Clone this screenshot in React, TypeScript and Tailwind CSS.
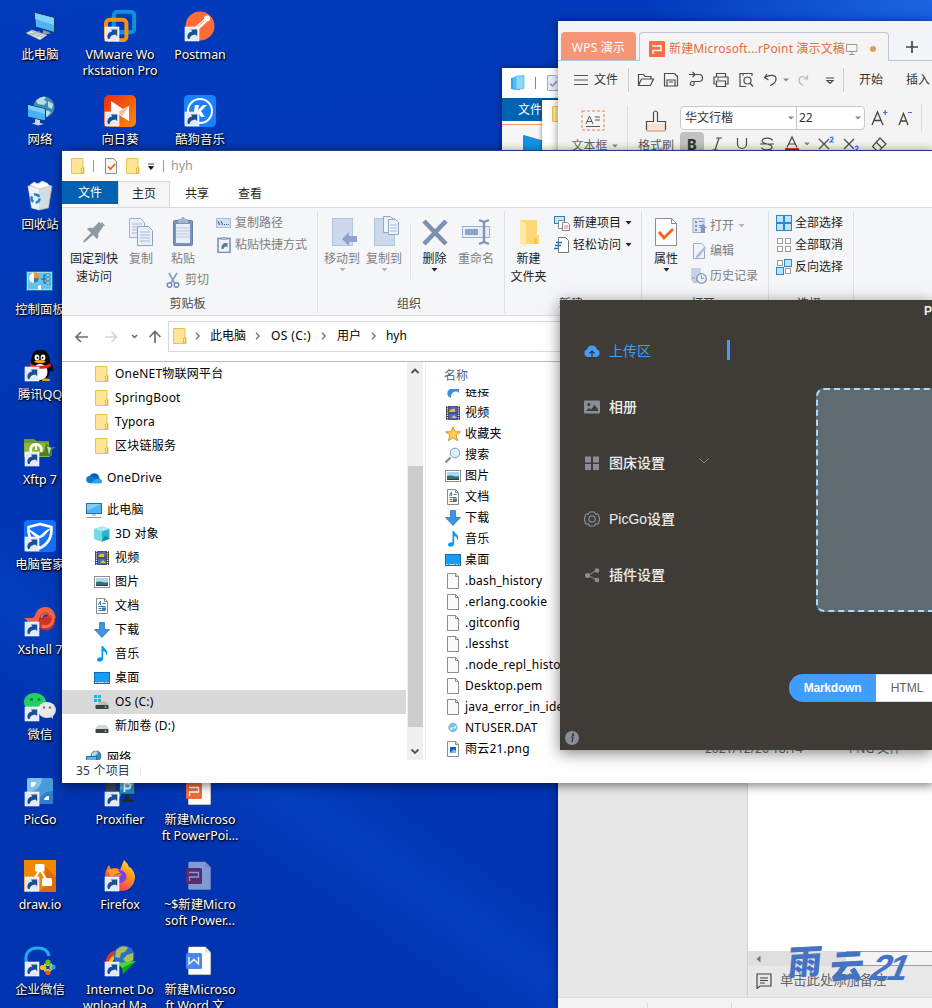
import React from 'react';

type Kids = { children?: React.ReactNode };

/* ---------- Desktop icons (32 x 32) ---------- */

const Shortcut = () => (
  <g>
    <rect x="1.2" y="17.2" width="13.6" height="13.6" fill="#e4e8fb" stroke="#fff" />
    <path d="M4 29c-1.6-4 .4-7.300 4.300-7.600l-1.300-2h6.200v6.500l-2-1.500c-3 .2-5.200 1.600-5.700 4.600z" fill="#1b4f93" />
  </g>
);

const Pic = ({ children, link = false, fade = false }: Kids & { link?: boolean; fade?: boolean }) => (
  <svg width="32" height="32" viewBox="0 0 32 32" className={fade ? 'shrink-0 opacity-50' : 'shrink-0'}>
    {children}
    {link && <Shortcut />}
  </svg>
);

const PcIcon = () => (
  <Pic>
    <path d="M10.500 2.500l20 5v15l-19-5.500z" fill="#4db4f5" stroke="#123a66" />
    <path d="M11 3l19 5v7L11 9z" fill="#7fd0fb" />
    <path d="M19 20l5 1.500 3 2-8 1z" fill="#8b99a5" />
    <path d="M2 23l6-3 15 5-7 5z" fill="#e2e6e9" stroke="#8c969d" strokeWidth=".6" />
    <path d="M5 23l14 4M8 21.500l12 4M7 25l9-4M12 27l7-4" stroke="#9ba4ab" strokeWidth=".7" />
  </Pic>
);
const NetIcon = () => (
  <Pic>
    <circle cx="20" cy="12" r="10.500" fill="#3d8fae" />
    <path d="M12 6c3-4 8-5 10-4l-2 3 3 2-3 3-6-1zM24 6l5 3-1 5-4-2zM21 15l6 2-4 5-3-2z" fill="#b8dcea" />
    <path d="M3.500 9.500l18 4.500v12l-18-4z" fill="#48b0f4" stroke="#0d3a68" />
    <path d="M4 10l17 4v5L4 14z" fill="#7cd0fb" />
    <path d="M11 24l5 1v3l4 1-6 1.500-6-2 3-1z" fill="#cdd3d7" />
  </Pic>
);
const BinIcon = () => (
  <Pic>
    <path d="M4 6l11-3 13 3-3.500 22-9 2-8-2z" fill="#d5dbe0" stroke="#9da9b3" strokeWidth=".8" />
    <path d="M4 6l11 3v21l-7-2z" fill="#eef1f3" />
    <path d="M6 5l4-3 4 2 4-3 5 2 3 3-11 3z" fill="#fafbfb" stroke="#b5bdc4" strokeWidth=".7" />
    <circle cx="11.500" cy="18.500" r="4" fill="none" stroke="#1d82d0" strokeWidth="2.600" strokeDasharray="6 2.400" />
  </Pic>
);
const PanelIcon = () => (
  <Pic>
    <rect x="2.500" y="6.500" width="26" height="19" fill="#61c3f3" stroke="#1a74b2" />
    <rect x="3.500" y="7.500" width="24" height="17" fill="none" stroke="#9be0fb" />
    <circle cx="10" cy="13" r="5" fill="#fff" />
    <path d="M10 8a5 5 0 0 1 0 10z" fill="#2b7fc0" />
    <path d="M10 7v6h5a5 5 0 0 0-5-6z" fill="#f79a25" />
    <path d="M17 14h3v-4h6M20 14h6M20 14v4h6" fill="none" stroke="#11609b" />
    <path d="M22 9h4v2h-4zM22 13h4v2h-4zM22 17h4v2h-4z" fill="#d7f1fd" stroke="#11609b" strokeWidth=".6" />
    <path d="M6 22.500h19" stroke="#f79a25" />
    <path d="M14 20.500h3v4h-3z" fill="#fff" />
  </Pic>
);
const QQIcon = () => (
  <Pic link>
    <path d="M7 12c0-17 19-17 19 0 4 5 4 8 2 10l-2-2c0 5-4 11-10 11S6 25 6 20z" fill="#0a0a0a" />
    <ellipse cx="16" cy="22" rx="7.500" ry="8" fill="#fff" />
    <ellipse cx="13" cy="7.500" rx="2.400" ry="3" fill="#fff" />
    <ellipse cx="19" cy="7.500" rx="2.400" ry="3" fill="#fff" />
    <circle cx="13.500" cy="7.800" r="1" />
    <circle cx="18.500" cy="7.800" r="1" />
    <ellipse cx="16" cy="11.600" rx="5.500" ry="1.700" fill="#f5a411" />
    <path d="M6 13c6 4 14 4 20.500 0l.5 3.500c-6 3-14 3-21.500.500z" fill="#e3211c" />
    <path d="M19 29c5-1 8 0 7 2h-8z" fill="#f5a411" />
  </Pic>
);
const XftpIcon = () => (
  <Pic link>
    <path d="M0 4h10l3 2h12v16H0z" fill="#6d9a2b" />
    <path d="M0 8h25l1 14H1z" fill="#8bb83e" />
    <path d="M22 8l4 4h6l-4 3v6H14l3-4h3z" fill="#4d7d20" />
    <path d="M23 11l4 2-2 7z" fill="#b9dcc3" />
    <path d="M7 17a5.500 5.500 0 1 1 10 0" fill="none" stroke="#fff" strokeWidth="2.600" />
    <path d="M12 8v7" stroke="#fff" strokeWidth="2" />
  </Pic>
);
const GuardIcon = () => (
  <Pic link>
    <rect width="32" height="32" rx="4" fill="#1671fb" />
    <path d="M16 4l11.500 3c.500 10-3 17-11.500 21C8 24 4 17 4.500 7z" fill="none" stroke="#fff" strokeWidth="2.600" />
    <path d="M5 9l9 6c1 1 2 1 3 0 3-3 6-6 11-7-6 4-8 11-13 10-4-1-8-4-10-9z" fill="#fff" />
  </Pic>
);
const XshellIcon = () => (
  <Pic link>
    <path d="M12 16c1 6 6 10 12 9 5-1 8-6 7-12l-5-3z" fill="#d3312b" />
    <path d="M0 13h8c3 0 3-4 5-7 4-6 16-6 18 4l1 3h-6c-1-5-9-6-10-1-1 3-2 6-5 6H6z" fill="#ee6346" />
    <path d="M17 13c0-7 12-7 12 1 0 6-6 9-11 7" fill="none" stroke="#ef6d50" strokeWidth="3" />
    <path d="M25 13c-2-4-7-1-5 2 2 4 8 2 7-3-1-6-11-6-11 2" fill="none" stroke="#c3322c" strokeWidth="1" />
  </Pic>
);
const WechatIcon = () => (
  <Pic link>
    <path d="M11 3C4 3 0 7 0 12c0 3 1 5 4 7l-1 4 5-2c10 2 15-4 14-10-1-5-6-8-11-8z" fill="#24cf68" />
    <circle cx="7.500" cy="9.500" r="1.500" fill="#0c7c3a" />
    <circle cx="15" cy="9.500" r="1.500" fill="#0c7c3a" />
    <ellipse cx="23" cy="20" rx="9" ry="8" fill="#e9e9e9" />
    <path d="M26 26l3 3v-5z" fill="#dedede" />
    <circle cx="20" cy="17.500" r="1.200" fill="#777" />
    <circle cx="26" cy="17.500" r="1.200" fill="#777" />
  </Pic>
);
const PicGoIcon = () => (
  <Pic link>
    <rect x="3" y="3" width="26" height="26" rx="2" fill="#4a9bdc" />
    <path d="M3 5a2 2 0 0 1 2-2h13c0 8-6 14-15 14z" fill="#7cc1f0" />
    <path d="M29 16v11a2 2 0 0 1-2 2H15c0-8 6-13 14-13z" fill="#2f80cc" />
    <path d="M7 7h5c0 3-2 5-5 5zM25 21v4h-5c0-2 2-4 5-4z" fill="#fff" />
  </Pic>
);
const DrawIcon = () => (
  <Pic link>
    <rect width="32" height="32" fill="#f08705" />
    <path d="M21 6l11 11v15H14l8-6z" fill="#dd6b0a" />
    <path d="M16 9L9 22M16 9l7 12" stroke="#fff" strokeWidth="2.200" />
    <rect x="11" y="4" width="9.500" height="7.500" rx="1.500" fill="#fff" />
    <rect x="18" y="18" width="10" height="8" rx="1.500" fill="#fff" />
  </Pic>
);
const WorkIcon = () => (
  <Pic link>
    <path d="M3 19C-1 8 6 3 14 3c6 0 10 3 11 8" fill="none" stroke="#1eabf2" strokeWidth="3" />
    <circle cx="24" cy="17" r="2.600" fill="#63c31a" />
    <circle cx="29" cy="22" r="2.600" fill="#20a3ef" />
    <circle cx="24" cy="27.500" r="2.600" fill="#f9502a" />
    <circle cx="18.500" cy="22.500" r="2.600" fill="#fdbc1a" />
    <path d="M20 19l4 1.500L28 19M28 20l-2 3 2 2M27 26l-3-1.500-4 1.500M20 25l2-2-2-3" fill="none" stroke="#c6d44a" strokeWidth="1.400" />
  </Pic>
);
const VmIcon = () => (
  <Pic link>
    <rect x="9.800" y="1.800" width="20.400" height="20.400" rx="3.500" fill="none" stroke="#0a95d9" strokeWidth="4" />
    <rect x="2" y="9.800" width="20.400" height="20.400" rx="3.500" fill="none" stroke="#f79209" strokeWidth="4" />
    <path d="M9.800 12.500v9.700h10" stroke="#0a95d9" strokeWidth="4" fill="none" />
  </Pic>
);
const SunIcon = () => (
  <Pic link>
    <defs>
      <linearGradient id="sun" x1="0" y1="0" x2="1" y2="1">
        <stop stopColor="#e82c12" />
        <stop offset="1" stopColor="#ff8b0b" />
      </linearGradient>
    </defs>
    <rect width="32" height="32" rx="5" fill="url(#sun)" />
    <path d="M7 6l12 8 6-3v15l-7-4-4-4-7 5z" fill="#fff" />
    <path d="M14 17l11-6-7 10z" fill="#ffb795" />
  </Pic>
);
const ProxIcon = () => (
  <Pic link>
    <path d="M2 4h10v12H2z" fill="#3b465a" />
    <rect x="15" y="4.500" width="16" height="15" rx="1" fill="#158fd9" stroke="#29323f" strokeWidth="1.500" />
    <path d="M16 5h14v5L16 15z" fill="#4bb8f3" />
    <path d="M20.500 17V8.500h3.500a2.500 2.500 0 0 1 0 5h-3" fill="none" stroke="#fff" strokeWidth="1.800" />
    <path d="M21 20h4v4l5 1-1 2H19l-2-2 4-1z" fill="#202833" />
    <path d="M14 23l2-4" stroke="#2ee85a" strokeWidth="2" />
  </Pic>
);
const FoxIcon = () => (
  <Pic link>
    <defs>
      <linearGradient id="fox" x1="1" y1="0" x2=".3" y2="1">
        <stop stopColor="#fff044" />
        <stop offset=".5" stopColor="#ff8a16" />
        <stop offset="1" stopColor="#f0286d" />
      </linearGradient>
    </defs>
    <path d="M20 0c3 3 4 4 5 7 2 0 5 4 6 9 0 9-6 15-14 15S2 26 1 17C1 11 3 8 5 5l2 4c3-2 7-1 9 1z" fill="url(#fox)" />
    <circle cx="16" cy="16.500" r="6.500" fill="#7b42e8" />
    <path d="M3 10c6-2 12 0 13 3-5 0-5 3-9 3z" fill="#ff9d14" />
    <path d="M10 15c4 0 5-2 8-1-2 3-5 4-8 1z" fill="#ff8219" />
  </Pic>
);
const IdmIcon = () => (
  <Pic link>
    <path d="M2 24C0 12 5 6 14 5l-2 4C7 11 6 15 6 24z" fill="#e2362c" />
    <path d="M4 24c0-9 3-13 8-15l-1 4c-3 3-3 6-3 11z" fill="#f4cc22" />
    <circle cx="20" cy="11" r="10.500" fill="#2f6cc4" />
    <path d="M12 6c4-6 10-5 12-3l-3 4-4 1-1 5-5-1zM23 10l6-2v7l-6 4-4-5z" fill="#a9bf57" />
    <path d="M14 18l18-2-13 13-1-6z" fill="#12a717" />
    <path d="M14 18l18-2-14 7z" fill="#35dd35" />
  </Pic>
);
const PostmanIcon = () => (
  <Pic link>
    <circle cx="16" cy="16" r="14.500" fill="#ff6c37" />
    <path d="M7 24l3-6 10-9 3 3-9 8z" fill="#fff" />
    <circle cx="23" cy="8.500" r="3" fill="#fff" />
    <path d="M11 19l9-8" stroke="#ff6c37" strokeWidth=".8" />
  </Pic>
);
const KugouIcon = () => (
  <Pic link>
    <rect width="32" height="32" rx="4.500" fill="#1b80fb" />
    <circle cx="16" cy="16" r="12" fill="none" stroke="#fff" strokeWidth="2" />
    <path d="M11 10h4l-1 5 5-5h4l-6 6 4 6h-4l-3-5-1 5H9z" fill="#fff" />
  </Pic>
);
const PptFile = ({ fade = false }: { fade?: boolean }) => (
  <Pic fade={fade}>
    <path d="M5 1.500h16l6 6V29a1 1 0 0 1-1 1H5a1 1 0 0 1-1-1V3z" fill="#fff" stroke="#3b4659" strokeWidth=".7" />
    <path d="M21 1.500v6h6z" fill="#dfe1e5" />
    <rect x="2" y="8" width="16" height="16" rx="1.500" fill={fade ? '#b4242a' : '#f26a3a'} />
    <path d="M5 12.500h9.500v4.500H5.500v4" fill="none" stroke="#fff" strokeWidth="1.300" />
  </Pic>
);
const WordFile = () => (
  <Pic>
    <path d="M5 1.500h16l6 6V29a1 1 0 0 1-1 1H5a1 1 0 0 1-1-1V3z" fill="#fff" stroke="#3b4659" strokeWidth=".7" />
    <path d="M21 1.500v6h6z" fill="#dfe1e5" />
    <rect x="2" y="8" width="16" height="16" rx="1.500" fill="#4a86ec" />
    <path d="M5 12v7l5-4.500 4.500 4.500v-7" fill="none" stroke="#fff" strokeWidth="1.300" />
  </Pic>
);

const Shortcuts = ({ items }: { items: [React.ReactNode, string][] }) => (
  <>
    {items.map(([icon, label]) => (
      <div key={label} className="flex h-[85px] w-20 shrink-0 flex-col items-center gap-[5px] pt-[10px]">
        {icon}
        <div className="text-center text-[12.400px] leading-4 whitespace-pre text-white [text-shadow:0_1px_2px_#000,1px_1px_2px_#000]">{label}</div>
      </div>
    ))}
  </>
);

const Desktop = () => (
  <div className="flex h-full">
    <div className="w-20">
      <Shortcuts
        items={[
          [<PcIcon />, '此电脑'], [<NetIcon />, '网络'], [<BinIcon />, '回收站'], [<PanelIcon />, '控制面板'],
          [<QQIcon />, '腾讯QQ'], [<XftpIcon />, 'Xftp 7'], [<GuardIcon />, '电脑管家'], [<XshellIcon />, 'Xshell 7'],
          [<WechatIcon />, '微信'], [<PicGoIcon />, 'PicGo'], [<DrawIcon />, 'draw.io'], [<WorkIcon />, '企业微信'],
        ]}
      />
    </div>
    <div className="flex w-20 flex-col">
      <Shortcuts items={[[<VmIcon />, 'VMware Wo\nrkstation Pro'], [<SunIcon />, '向日葵']]} />
      <div className="h-[595px] shrink-0" />
      <Shortcuts items={[[<ProxIcon />, 'Proxifier'], [<FoxIcon />, 'Firefox'], [<IdmIcon />, 'Internet Do\nwnload Ma...']]} />
    </div>
    <div className="flex w-20 flex-col">
      <Shortcuts items={[[<PostmanIcon />, 'Postman'], [<KugouIcon />, '酷狗音乐']]} />
      <div className="h-[595px] shrink-0" />
      <Shortcuts items={[[<PptFile />, '新建Microso\nft PowerPoi...'], [<PptFile fade />, '~$新建Micro\nsoft Power...'], [<WordFile />, '新建Microso\nft Word 文...']]} />
    </div>
  </div>
);

/* ---------- Explorer small icons (16 x 16) ---------- */

const S = ({ children }: Kids) => <svg width="16" height="16" viewBox="0 0 16 16" className="shrink-0">{children}</svg>;

const Folder = () => (
  <S>
    <path d="M1.500.500h11.500v9h1v6H1.500z" fill="#ffe598" stroke="#e9c34c" />
    <path d="M11.500 15V10h2v5z" fill="#ffe9a8" stroke="#dfb83f" />
  </S>
);
const Cloud = () => (
  <S>
    <path d="M4 5.500a5 5 0 0 1 8.500 0l1.500 4H2z" fill="#0a63bb" />
    <path d="M3.500 13a3.500 3.500 0 0 1 .5-7c2 0 4 1 5 2l4 5z" fill="#0f77d0" />
    <path d="M4 13.500l5-4c2-2 7-1 7 2 0 1-1 2-2.500 2z" fill="#2ba4ec" />
  </S>
);
const Monitor = () => (
  <S>
    <rect x=".5" y="1.500" width="15" height="10" fill="#49b4f8" stroke="#2f6f99" />
    <path d="M1 2h14L1 9z" fill="#7fcdfc" />
    <path d="M6 13h4M1 15.500h14" stroke="#8598a6" />
  </S>
);
const Cube = () => (
  <S>
    <path d="M8 .500l7.500 2.500v10L8 15.500.500 13V3z" fill="#2bb6cf" />
    <path d="M.500 3L8 5.500V15.500L.500 13z" fill="#6fdce6" />
    <path d="M8 .500l7.500 2.500L8 5.500.500 3z" fill="#a8eef2" />
    <path d="M8 15.500l3-6 4.500 3z" fill="#0d89a5" />
  </S>
);
const Film = () => (
  <S>
    <rect x="1" y="1" width="14" height="14" fill="#3c3c3c" />
    <path d="M2.500 1v14M13.500 1v14" stroke="#eee" strokeWidth="1.400" strokeDasharray="1.200 1" />
    <path d="M4 1.500h8v6H4z" fill="#4168c4" />
    <path d="M4 8.500h8v6H4z" fill="#3c6fd2" />
    <path d="M6 4h4v3H4zM6 13l3-3 3 3z" fill="#f5b92b" />
    <path d="M8 2l3 2H8z" fill="#e24e3a" />
  </S>
);
const Photo = () => (
  <S>
    <rect x=".5" y="2.500" width="15" height="11" fill="#fff" stroke="#8e8e8e" />
    <path d="M2 4h12v8H2z" fill="#a8d7f3" />
    <path d="M2 8c5-2 8 2 12 0v4H2z" fill="#3c6b68" />
    <path d="M2 11h12v1H2z" fill="#1b416d" />
  </S>
);
const Doc = () => (
  <S>
    <path d="M2.500.500h8l3 3v12h-11z" fill="#fff" stroke="#8a8a8a" />
    <path d="M10.500.500v3h3" fill="none" stroke="#8a8a8a" />
    <path d="M4.500 7l2-4v4M8.500 5.500h3M4.500 8.500h7M4.500 10.500h3M4.500 12.500h7" stroke="#2b7cbf" fill="none" />
    <path d="M8 9.500h4v2.500H8z" fill="#467b8c" />
  </S>
);
const Down = () => (
  <S>
    <path d="M5.500.500h5v7h5L8 15.500.500 7.500h5z" fill="#3b95e6" stroke="#1f6db4" strokeWidth=".7" />
  </S>
);
const Note = () => (
  <S>
    <path d="M7.500 0h1.700c.5 3 4.300 3 4 7-.2 1.500-.6 2-1.200 2.500.5-3-1-4-2.800-4.500V13c0 3-6.200 4-6.200.8C3 11.500 6 10.800 7.500 11.500z" fill="#0a96f3" />
  </S>
);
const Desk = () => (
  <S>
    <rect x=".5" y="2.500" width="15" height="11" fill="#179ff8" stroke="#106bac" />
    <path d="M1 12.500h14" stroke="#b8e2fb" strokeDasharray="2 1 6 1" />
  </S>
);
const Drive = ({ os = false }: { os?: boolean }) => (
  <S>
    {os && <path d="M0 1h3v3H0zM4 1h3v3H4zM0 5h3v3H0zM4 5h3v3H4z" fill="#16b4f1" />}
    <path d={os ? 'M7 7.500h5l3 3.500H2z' : 'M4 7h8l3 4H1z'} fill={os ? '#bcbcbc' : '#d8d8d8'} />
    <rect x="1.500" y="11" width="13" height="4" rx=".7" fill="#3d4248" />
    <circle cx="11.500" cy="13" r="1" fill="#2dec4e" />
  </S>
);
const Globe = () => (
  <S>
    <circle cx="10" cy="6" r="5.500" fill="#398cad" />
    <path d="M6 3l4-2 2 2-3 3-3 1z" fill="#b3dce9" />
    <path d="M.500 6.500h10v7h-10z" fill="#54b9f6" stroke="#276a9d" />
  </S>
);
const Star = () => (
  <S>
    <path d="M8 .800l2.100 5h5.200l-4.200 3.500 1.600 5.500L8 11.600l-4.700 3.200 1.600-5.500L.700 5.800h5.200z" fill="#fcd14c" stroke="#e48a2d" />
  </S>
);
const Search = () => (
  <S>
    <path d="M.500 15.500l5-5" stroke="#7d8791" strokeWidth="2" />
    <circle cx="10" cy="6" r="4.800" fill="#d8effd" stroke="#7d9db8" />
  </S>
);
const LinkArrow = () => (
  <S>
    <path d="M6 14C0 12 2 4 8 4.500V3h6v6l-2-1.500c-4-.5-6 2-6 6.500z" fill="#3b91dc" />
  </S>
);
const Blank = () => (
  <S>
    <path d="M2.500.500h8l3 3v12h-11z" fill="#fafafa" stroke="#8c8c8c" />
    <path d="M10.500.500v3h3" fill="none" stroke="#8c8c8c" />
  </S>
);
const Dat = () => (
  <S>
    <circle cx="8" cy="7.500" r="4.700" fill="#7bbfe4" />
    <path d="M5 9l2-2 1 1 4-3-1.500 3.500-2-.5-2 2z" fill="#fff" />
  </S>
);
const Png = () => (
  <S>
    <path d="M2.500.500h8l3 3v12h-11z" fill="#fff" stroke="#8c8c8c" />
    <path d="M10.500.500v3h3" fill="none" stroke="#8c8c8c" />
    <path d="M5 6h6v6H5z" fill="#155fb5" />
    <path d="M7 10l2-2 2 2v2H5z" fill="#6cc0f2" />
  </S>
);

const PinnedSheet = () => (
  <S>
    <path d="M2.500.500h8l3 3v12h-11z" fill="#f5f5f5" stroke="#8c8c8c" />
    <path d="M5 8.500l2.500 2.500L12 6" fill="none" stroke="#f05a1c" strokeWidth="1.700" />
  </S>
);
const Caret = ({ dim = false }: { dim?: boolean }) => (
  <svg width="7" height="4" viewBox="0 0 7 4" className="shrink-0"><path d="M.500 0h6l-3 3.500z" fill={dim ? '#b5b5b5' : '#222'} /></svg>
);

/* ---------- Explorer ribbon ---------- */

const Group = ({ label, w, children }: Kids & { label: string; w: string }) => (
  <div className={`flex h-[102px] shrink-0 flex-col border-r border-[#dfe0e2] ${w}`}>
    <div className="flex h-[84px]">{children}</div>
    <div className="h-[18px] pr-1 text-center leading-[18px] text-[#494949]">{label}</div>
  </div>
);
const Big = ({ icon, w, label, dim = false, caret = false }: { icon: React.ReactNode; w: string; label: string; dim?: boolean; caret?: boolean }) => (
  <div className={`flex shrink-0 flex-col items-center pt-[5px] ${w} ${dim ? 'text-[#808080]' : 'text-[#1d1d1d]'}`}>
    <div className="h-[34px]">{icon}</div>
    <div className="text-center leading-[18px] whitespace-pre">{label}</div>
    {caret && <Caret dim={dim} />}
  </div>
);
const Line = ({ icon, label, dim = false, h, caret = false }: { icon: React.ReactNode; label: string; dim?: boolean; h: string; caret?: boolean }) => (
  <div className={`flex items-center gap-[3px] whitespace-nowrap ${h} ${dim ? 'text-[#808080]' : 'text-[#1d1d1d]'}`}>
    {icon}
    <span>{label}</span>
    {caret && <span className="ml-[1px] flex"><Caret dim={dim} /></span>}
  </div>
);
const B = ({ children }: Kids) => <svg width="30" height="32" viewBox="0 0 30 32">{children}</svg>;

const Squares = ({ on }: { on: boolean[] }) => (
  <S>
    {[[0.5, 0.5], [8.500, 0.5], [0.5, 8.500], [8.500, 8.500]].map(([x, y], i) =>
      on[i] ? (
        <rect key={i} x={x} y={y} width="7" height="7" fill="#bfe3fb" stroke="#2589d8" />
      ) : (
        <rect key={i} x={x + 1} y={y + 1} width="5" height="5" fill="#fff" stroke="#9c9c9c" />
      ),
    )}
  </S>
);

const Ribbon = () => (
  <div className="flex h-[109px] shrink-0 border-y border-[#d9dadc] bg-[#f5f6f8] pt-[3px]">
    <Group label="剪贴板" w="w-64">
      <Big w="w-16" label={'固定到快\n速访问'} icon={<B><path d="M15 11l7-7 2 1.500L25 4l3 4-1.500 0-5.500 8c1 3 0 4-1 5l-4-4-8 7-2 .5 1-2.500 7-7-4-4c2-1.500 3-1.500 6-1z" transform="translate(-2 2)" fill="#8c9aa3" /></B>} />
      <Big w="w-[30px]" dim label="复制" icon={<B><path d="M3.500 2.500h11l4 4v15h-15z" fill="#eaf0f9" stroke="#9db0d0" /><path d="M6 8h10M6 11h10M6 14h6M6 17h6" stroke="#a6b9d8" /><path d="M11.500 10.500h11l4 4v15h-15z" fill="#eaf0f9" stroke="#8ca2c6" /><path d="M14 16h10M14 19h10M14 22h10M14 25h10" stroke="#a6b9d8" /></B>} />
      <div className="w-[54px]">
        <Big w="w-[54px]" dim label="粘贴" icon={<B><rect x="5.500" y="4.500" width="19" height="25" rx="1" fill="#7c93bd" stroke="#687fab" /><path d="M8 8h14v19H8z" fill="#e8eef8" /><path d="M10 3h3l1-2h2l1 2h3v4H10z" fill="#a6b4ca" /><path d="M8 12h14M8 15h14M8 18h14M8 21h14" stroke="#b9c8e1" /></B>} />
        <div className="flex h-[24px] items-center gap-[3px] pl-[10px] text-[#808080]">
          <S><path d="M3 1l5.500 10M11 1L5 11" stroke="#8e9fbd" strokeWidth="1.700" /><circle cx="3.500" cy="13" r="2.300" fill="none" stroke="#7489b4" strokeWidth="1.500" /><circle cx="10.500" cy="13" r="2.300" fill="none" stroke="#7489b4" strokeWidth="1.500" /></S>
          <span className="whitespace-nowrap">剪切</span>
        </div>
      </div>
      <div className="pt-[1px] pl-[6px]">
        <Line dim h="h-[22px]" label="复制路径" icon={<S><rect x=".5" y="3.500" width="14" height="9" fill="#d6dfee" stroke="#b0bfd8" /><path d="M2 6l1.500 4M5 6l1.500 4M8 9.500h1M10 9.500h1M12 9.500h1" stroke="#42587f" /></S>} />
        <Line dim h="h-[22px]" label="粘贴快捷方式" icon={<S><rect x="2" y="1.500" width="12" height="14" fill="#eef2f8" stroke="#7c8fb2" strokeWidth="1.600" /><path d="M5 0h6v3H5z" fill="#a6b4ca" /><path d="M5.500 12c-.5-3 .5-4.500 2.500-5L7 6h4.500v4.500l-1-1c-2 0-2.500 1-3 2.500z" fill="#5a78aa" /></S>} />
      </div>
    </Group>
    <Group label="组织" w="w-[187px]">
      <div className="w-[3px]" />
      <Big w="w-[42px]" dim caret label="移动到" icon={<B><rect x="5.500" y="2.500" width="20" height="27" fill="#ccd9ec" stroke="#b4c6df" /><path d="M15 23l7-7v4h8v6h-8v4z" fill="#8ea3c6" /></B>} />
      <Big w="w-[42px]" dim caret label="复制到" icon={<B><rect x="5.500" y="2.500" width="20" height="27" fill="#ccd9ec" stroke="#b4c6df" /><path d="M14.500.500h7l3 3v13h-10z" fill="#eef3fa" stroke="#93a7c9" /><path d="M19.500 3.500h7l3 3v12h-10z" fill="#eef3fa" stroke="#93a7c9" /><path d="M21 9h7M21 12h7M21 15h7" stroke="#a6b9d8" /></B>} />
      <div className="mt-[13px] mr-[3px] ml-[5px] h-[55px] w-px bg-[#dfe0e2]" />
      <Big w="w-[41px]" caret label="删除" icon={<B><path d="M4 5l22 23M26 5L4 28" stroke="#7d90b1" strokeWidth="4.600" /></B>} />
      <Big w="w-[42px]" dim label="重命名" icon={<B><rect x="1.500" y="10.500" width="27" height="11" fill="#e8eef7" stroke="#9aaed0" /><path d="M4 13h13v6H4z" fill="#8ea3c9" /><path d="M18 4l5 2 5-2M23 5v22M18 28l5-2 5 2" fill="none" stroke="#8294b3" strokeWidth="2.400" /></B>} />
    </Group>
    <Group label="新建" w="w-[137px]">
      <Big w="w-[47px]" label={'新建\n文件夹'} icon={<B><path d="M6 4h17v15h2v9H6z" fill="#fcd876" /><path d="M6 4l6 4v23l-6-4z" fill="#ffe9a9" /><path d="M20 22h3v6h-3z" fill="#f3c654" /></B>} />
      <div className="pt-[1px] pl-[2px]">
        <Line caret h="h-[22px]" label="新建项目" icon={<S><rect x=".5" y="1.500" width="10" height="7" fill="#bfe6fa" stroke="#397da5" /><path d="M4.500 5.500h5l2 2v6h-7z" fill="#fff" stroke="#888" /><path d="M8.500 7.500h5l2 2v6h-7z" fill="#fff" stroke="#888" /><path d="M10 11h4M10 13h4" stroke="#e47c7c" /></S>} />
        <Line caret h="h-[22px]" label="轻松访问" icon={<S><path d="M4.500.500h7l3 3v12h-10z" fill="#fff" stroke="#777" /><path d="M2 5.500h6M1 8.500h6M0 11.500h4" stroke="#1d6cb5" strokeWidth="1.400" /></S>} />
      </div>
    </Group>
    <Group label="打开" w="w-[127px]">
      <Big w="w-12" caret label="属性" icon={<B><path d="M4.500 2.500h16l5 5v22h-21z" fill="#fcfcfc" stroke="#8b8b8b" /><path d="M20.500 2.500v5h5" fill="none" stroke="#8b8b8b" /><path d="M8 16l5 6 9-9" fill="none" stroke="#f3641f" strokeWidth="2.800" /></B>} />
      <div className="pt-[2px] pl-[1px]">
        <Line dim caret h="h-[25px]" label="打开" icon={<S><rect x="2" y=".5" width="11" height="14" fill="#dbe4f1" stroke="#9aadcb" /><path d="M4 3h2v2H4zM4 7h2v2H4zM4 11h2v2H4zM8 3h4v1H8zM8 7h4v1H8z" fill="#7b93bd" /><path d="M8 10l4-4 4 4h-2v5h-4v-5z" fill="#8298bf" /></S>} />
        <Line dim h="h-[25px]" label="编辑" icon={<S><path d="M2.500.500h8l3 3v12h-11z" fill="#f0f4fa" stroke="#9aadcb" /><path d="M5 13l8-9 2 1-7 9-3 1z" fill="#a9bbd8" /></S>} />
        <Line dim h="h-[25px]" label="历史记录" icon={<S><path d="M0 0h10v13H0z" fill="#c5d3e7" /><circle cx="10.500" cy="10.500" r="4.800" fill="#e9eff7" stroke="#8294b3" strokeWidth="1.300" /><path d="M10.500 7.500v3h2.500M4 10H1M2 14h4" stroke="#8294b3" fill="none" /></S>} />
      </div>
    </Group>
    <Group label="选择" w="w-[85px]">
      <div className="pt-[1px] pl-[7px]">
        <Line h="h-[22px]" label="全部选择" icon={<Squares on={[true, true, true, true]} />} />
        <Line h="h-[22px]" label="全部取消" icon={<Squares on={[false, false, false, false]} />} />
        <Line h="h-[22px]" label="反向选择" icon={<Squares on={[false, true, true, false]} />} />
      </div>
    </Group>
  </div>
);

const Chev = () => <svg width="6" height="8" viewBox="0 0 6 8" className="shrink-0"><path d="M1 .800L4.200 4 1 7.200" fill="none" stroke="#777" strokeWidth="1.400" /></svg>;

const NavRow = ({ icon, label, deep = 1, on = false }: { icon: React.ReactNode; label: string; deep?: number; on?: boolean }) => (
  <div className={`flex h-6 shrink-0 items-center gap-[5px] whitespace-pre ${deep ? 'pl-8' : 'pl-6'} ${on ? 'bg-[#d9d9d9]' : ''}`}>
    {icon}
    <span className="tracking-[.22px] text-black">{label}</span>
  </div>
);

const files: [React.ReactNode, string][] = [
  [<LinkArrow />, '链接'], [<Film />, '视频'], [<Star />, '收藏夹'], [<Search />, '搜索'], [<Photo />, '图片'], [<Doc />, '文档'],
  [<Down />, '下载'], [<Note />, '音乐'], [<Desk />, '桌面'], [<Blank />, '.bash_history'], [<Blank />, '.erlang.cookie'],
  [<Blank />, '.gitconfig'], [<Blank />, '.lesshst'], [<Blank />, '.node_repl_history'], [<Blank />, 'Desktop.pem'],
  [<Blank />, 'java_error_in_idea'], [<Dat />, 'NTUSER.DAT'], [<Png />, '雨云21.png'],
];

const Explorer = () => (
  <div className="flex h-[633px] w-[872px] flex-col border-t border-[#1c3f84] bg-white text-[12px] shadow-[0_2px_10px_rgba(0,0,0,.55)]">
    <div className="flex h-[30px] shrink-0 items-center pl-2">
      <Folder />
      <div className="ml-[7px] h-3 w-px bg-[#999]" />
      <span className="ml-[9px]"><PinnedSheet /></span>
      <span className="ml-[6px]"><Folder /></span>
      <svg width="8" height="7" className="ml-[6px]" viewBox="0 0 8 7"><path d="M1 1h6M1.500 3.500h5l-2.500 3z" fill="#111" stroke="#111" strokeWidth=".8" /></svg>
      <div className="ml-[8px] h-3 w-px bg-[#999]" />
      <span className="ml-[7px] text-[12.500px] text-[#999]">hyh</span>
    </div>
    <div className="flex h-[26px] shrink-0 text-[#262626]">
      <div className="h-[23px] w-14 bg-[#0063b1] text-center leading-[23px] text-white">文件</div>
      <div className="-mb-px h-[27px] w-[52px] border border-b-0 border-[#d9dadc] bg-[#f5f6f8] text-center leading-6">主页</div>
      <div className="w-[54px] text-center leading-[26px]">共享</div>
      <div className="w-[52px] text-center leading-[26px]">查看</div>
    </div>
    <Ribbon />
    <div className="flex h-[46px] shrink-0 items-center border-b border-[#bcbcbc] pb-[5px] pl-3">
      <svg width="94" height="30" viewBox="74 321 94 30" fill="none" className="shrink-0">
        <path d="M88 337H76M81 332l-5 5 5 5M155 343v-11M149.500 337l5.500-5.500 5.500 5.500" stroke="#6d6d6d" strokeWidth="1.700" />
        <path d="M105 337h11M111.500 332l5 5-5 5" stroke="#d5d5d5" strokeWidth="1.700" />
        <path d="M132 335l2.500 2.500L137 335" stroke="#666" strokeWidth="1.500" />
      </svg>
      <div className="flex h-[31px] w-[760px] items-center border border-[#d9d9d9] pl-[3px] text-black">
        <Folder />
        <span className="mr-[9px] ml-[7px]"><Chev /></span>此电脑<span className="mx-[9px]"><Chev /></span><span className="ml-px tracking-[.4px]">OS (C:)</span><span className="mx-[10px]"><Chev /></span>用户<span className="mr-[9px] ml-[10px]"><Chev /></span>hyh
      </div>
    </div>
    <div className="flex h-[398px] shrink-0">
      <div className="flex w-[344px] shrink-0 flex-col overflow-hidden">
        <NavRow icon={<Folder />} label="OneNET物联网平台" />
        <NavRow icon={<Folder />} label="SpringBoot" />
        <NavRow icon={<Folder />} label="Typora" />
        <NavRow icon={<Folder />} label="区块链服务" />
        <div className="h-2 shrink-0" />
        <NavRow deep={0} icon={<Cloud />} label="OneDrive" />
        <div className="h-2 shrink-0" />
        <NavRow deep={0} icon={<Monitor />} label="此电脑" />
        <NavRow icon={<Cube />} label="3D 对象" />
        <NavRow icon={<Film />} label="视频" />
        <NavRow icon={<Photo />} label="图片" />
        <NavRow icon={<Doc />} label="文档" />
        <NavRow icon={<Down />} label="下载" />
        <NavRow icon={<Note />} label="音乐" />
        <NavRow icon={<Desk />} label="桌面" />
        <NavRow on icon={<Drive os />} label="OS (C:)" />
        <NavRow icon={<Drive />} label="新加卷 (D:)" />
        <div className="h-2 shrink-0" />
        <NavRow deep={0} icon={<Globe />} label="网络" />
      </div>
      <div className="ml-px flex w-4 shrink-0 flex-col items-center justify-between bg-[#f0f0f0]">
        <svg width="10" height="18" viewBox="0 0 10 18"><path d="M1.500 11L5 7.500 8.500 11" fill="none" stroke="#505050" strokeWidth="1.800" /></svg>
        <div className="mt-[86px] h-[261px] w-[15px] bg-[#cdcdcd]" />
        <div className="flex-1" />
        <svg width="10" height="18" viewBox="0 0 10 18"><path d="M1.500 7.500L5 11l3.500-3.500" fill="none" stroke="#505050" strokeWidth="1.800" /></svg>
      </div>
      <div className="ml-[2px] w-[506px] shrink-0 border-l border-[#f0f0f0]">
        <div className="h-[27px] pl-[18px] leading-[27px] text-[#4c607a]">名称</div>
        <div className="flex h-[371px] flex-col justify-end overflow-hidden pb-px">
          {files.map(([icon, name], i) => (
            <div key={name} className="flex h-[21px] shrink-0 items-center pl-[19px] whitespace-nowrap text-black">
              {icon}
              <span className="ml-1 w-60 tracking-[.2px]">{name}</span>
              {i === 17 && <span className="w-36 text-[#6d6d6d]">2021/12/26 18:14</span>}
              {i === 17 && <span className="text-[#6d6d6d]">PNG 文件</span>}
            </div>
          ))}
        </div>
      </div>
    </div>
    <div className="flex h-[22px] shrink-0 items-center pl-[14px] text-[#1e395b]">
      <span className="tracking-[.2px]">35 个项目</span><span className="ml-[10px] h-3 w-px bg-[#eee]" />
    </div>
  </div>
);

/* ---------- Second explorer, mostly covered ---------- */

const BackExplorer = () => (
  <div className="h-[200px] w-[200px] bg-white text-[12px] shadow-[0_0_6px_rgba(0,0,0,.5)]">
    <div className="flex h-[30px] items-center pl-2">
      <svg width="17" height="16" viewBox="0 0 17 16"><path d="M1 3l9-1v13l-9-1z" fill="#2aa4ef" /><path d="M3 2l8-1v13l-8 1z" fill="#55bdf6" /><path d="M6 1l8-.500v13l-8 1z" fill="#8cd8fb" stroke="#40acea" strokeWidth=".6" /></svg>
      <div className="ml-2 h-3 w-px bg-[#888]" />
      <svg width="16" height="16" viewBox="0 0 16 16" className="ml-[9px]"><path d="M2.500.500h8l3 3v12h-11z" fill="#e7eef8" stroke="#9bacca" /><path d="M5 8.500l2.500 2.500L12 6" fill="none" stroke="#8aa0c4" strokeWidth="1.700" /></svg>
    </div>
    <div className="h-[23px] bg-[#0063b1] pl-4 leading-[23px] text-white">文件</div>
    <div className="h-[3px] border-b border-white" />
    <div className="h-[80px] border-t border-[#ff9a68] bg-[#f5f6f8] pt-[9px] pl-[21px]">
      <svg width="30" height="22" viewBox="0 0 30 22"><path d="M.500 1.500l28 8v13l-28-7z" fill="#0d97ea" stroke="#5b7488" /></svg>
    </div>
  </div>
);

/* ---------- WPS presentation ---------- */

const W = ({ children }: Kids) => (
  <span className="flex w-[25px] shrink-0 justify-center">
    <svg width="18" height="18" viewBox="0 0 18 18" fill="none" stroke="#4a4a4a" strokeWidth="1.200">{children}</svg>
  </span>
);
const Tri = () => <svg width="6" height="4" viewBox="0 0 6 4" className="shrink-0"><path d="M0 .500h6l-3 3z" fill="#888" /></svg>;

const Wps = () => (
  <div className="flex h-[987px] w-[374px] flex-col overflow-hidden bg-[#f4f4f5] text-[12px] text-[#333] shadow-[0_0_8px_rgba(0,0,0,.45)]">
    <div className="flex h-10 shrink-0 items-end border-b border-[#bfc6d8] bg-[#f3f4f9] pl-[3px]">
      <div className="h-7 w-[75px] rounded-t-[4px] bg-[#f79577] text-center leading-8 tracking-[.2px] text-white">WPS 演示</div>
      <div className="-mb-px ml-[3px] flex h-[29px] w-[250px] items-center rounded-t-[4px] border border-b-0 border-[#bfc6d8] bg-[#f4f4f5] pt-[3px] pl-[9px] whitespace-nowrap text-[#e76c37]">
        <svg width="16" height="16" viewBox="0 0 16 16"><rect width="16" height="16" rx="1" fill="#f76e43" /><path d="M3.500 5h8.500v4.500H4V13" fill="none" stroke="#fff" strokeWidth="1.300" /></svg>
        <span className="ml-1 w-[177px] tracking-[.15px]">新建Microsoft...rPoint 演示文稿</span>
        <svg width="12" height="12" viewBox="0 0 12 12" fill="none" stroke="#999"><path d="M.500 1.500h10.500v7H.500zM5.800 8.500v3M3 11.500h5.500" /></svg>
        <span className="ml-3 size-[6px] rounded-full bg-[#e49d56]" />
      </div>
      <svg width="12" height="12" viewBox="0 0 12 12" className="mb-[7px] ml-[17px]"><path d="M6 0v12M0 6h12" stroke="#444" strokeWidth="1.700" /></svg>
    </div>
    <div className="flex h-[37px] shrink-0 items-center whitespace-nowrap">
      <svg width="14" height="10" viewBox="0 0 14 10" className="ml-4"><path d="M0 .500h14M0 5h14M0 9.500h14" stroke="#555" /></svg>
      <span className="ml-[6px]">文件</span>
      <div className="mr-[4px] ml-[10px] h-6 w-px bg-[#cfcfcf]" />
      <W><path d="M1.500 14V3.500h5l1.500 2h6V8M1.500 14.500l3-6.500h12l-3 6.500z" /></W>
      <W><path d="M2.500 2.500h10l3 3v9.500h-13zM5 2.500h7M5 15V9h8v6M7 11h4" /></W>
      <W><path d="M2 3.500h6M5.500 1L8 3.500 5.500 6M8 3.500h4a3.500 3.500 0 0 1 0 7H7v3a2 2 0 1 1-2-3h4" /></W>
      <W><path d="M4.500 6V2.500h9V6M4.500 13h-2.500V6h14v7h-2.500M4.500 10h9v5.500h-9zM5 8h2" /></W>
      <W><path d="M9 15.500H3v-13h12V5M6 2.500v2" /><circle cx="10.500" cy="9.500" r="3.500" /><path d="M13 12l3 3.500" /></W>
      <W><path d="M5 3L2.500 6.500 6.500 9M2.500 6.500C9 3 14 4 14 8c0 3-3 5.500-6 6.500" /></W>
      <Tri />
      <span className="ml-[2px]"><W><g stroke="#bbb"><path d="M12.500 4v4h-4M12.500 8C9 4 4 5 4 9.500c0 2 1 3.500 4 4.500" /></g></W></span>
      <span className="ml-px"><W><path d="M5 7h8M6 9.500h6l-3 3z" /></W></span>
      <div className="ml-[1px] h-6 w-px bg-[#cfcfcf]" />
      <span className="ml-[15px]">开始</span>
      <span className="ml-[23px]">插入</span>
    </div>
    <div className="flex h-[60px] shrink-0 whitespace-nowrap">
      <div className="flex w-[69px] shrink-0 flex-col items-center gap-[5px] pt-[12px] text-[#666]">
        <svg width="24" height="22" viewBox="0 0 24 22" fill="none"><rect x="1" y="1" width="22" height="19" stroke="#e0834e" strokeDasharray="3 2" /><path d="M5 14l3.500-8L12 14M6 11.500h5M14 7h5M14 10h5M5 16.500h14" stroke="#555" /></svg>
        <span className="flex items-center gap-1 pl-[4px]">文本框 <Tri /></span>
      </div>
      <div className="mt-2 h-[52px] w-px shrink-0 bg-[#dedede]" />
      <div className="flex w-[52px] shrink-0 flex-col items-center gap-[5px] pt-[12px] pl-1 text-[#555]">
        <svg width="22" height="22" viewBox="0 0 22 22"><path d="M1.500 13.500h19V20h-19z" fill="#f5e5d9" /><path d="M1.500 20v-8.500h7V2.500q2-3 4 0v9h8V20" fill="none" stroke="#4a4a4a" strokeWidth="1.200" /><path d="M1 21h20" stroke="#e0834e" /></svg>
        <span>格式刷</span>
      </div>
      <div className="pt-[6px]">
        <div className="flex h-7 items-center">
          <div className="flex h-[24px] w-[185px] shrink-0 items-center rounded-[4px] border border-[#c9c9c9] bg-white">
            <span className="w-[107px] pl-1">华文行楷</span>
            <Tri />
            <span className="ml-[2px] flex h-full w-[59px] items-center border-l border-[#c9c9c9] pl-[2px]">22</span>
            <Tri />
          </div>
          <svg width="44" height="18" viewBox="0 0 44 18" className="ml-[6px] shrink-0" fill="none"><path d="M1 16L6.500 3 12 16M3 11.500h7M28 16l4.500-11.500L37 16M30 12h5" stroke="#444" strokeWidth="1.300" /><path d="M12 3.500h4.500M14.200 1v5M37 3.500h4" stroke="#3a72d8" strokeWidth="1.200" /></svg>
          <div className="ml-[6px] h-7 w-px shrink-0 bg-[#dedede]" />
        </div>
        <div className="flex h-6 items-center">
          <div className="flex h-6 w-6 items-center justify-center rounded-[4px] bg-[#c1c1c1] font-['Inter'] text-[14px] font-extrabold text-[#333]">B</div>
          <W><path d="M8 3h6M4 15h6M11 3L7 15" /></W>
          <W><path d="M4.500 3v6a4.500 4.500 0 0 0 9 0V3" /><path d="M3 16.500h12" stroke="#3a72d8" /></W>
          <W><path d="M14.500 5.500C13 2 4 2.500 4 6s10 2.500 10 6-9 4-10.500.500M2 9h14" /></W>
          <W><path d="M4 12.500L9 2l5 10.500M6 9h6" /><path d="M2 14.500h14" stroke="#e60012" strokeWidth="2.600" /></W>
          <Tri />
          <span className="ml-[3px]"><W><path d="M2 4l10 10M12 4L2 14" /><path d="M13 3q3-2 3 .5 0 1-3 3.500h4" stroke="#3a72d8" /></W></span>
          <W><path d="M2 4l10 10M12 4L2 14" /><path d="M13 12q3-2 3 .5 0 1-3 3.500h4" stroke="#3a72d8" /></W>
          <span className="ml-[3px]"><W><path d="M10 3l6 6-6.500 6.500h-3l-4-4zM6 7l6 6" /></W></span>
        </div>
      </div>
    </div>
    <div className="flex h-[839px] shrink-0">
      <div className="w-[190px] shrink-0 border-r border-[#d2d2d2] bg-[#e7e7e7]" />
      <div className="flex w-[184px] shrink-0 flex-col overflow-hidden bg-white">
        <div className="h-[793px] shrink-0" />
        <div className="flex h-[15px] shrink-0 items-center bg-[#dfdfdf] pl-2">
          <svg width="5" height="8" viewBox="0 0 5 8" className="shrink-0"><path d="M4.500.500v7L.500 4z" fill="#777" /></svg>
          <div className="ml-[85px] h-[15px] w-[100px] shrink-0 border-y border-[#9f9f9f] bg-[#f4f4f4]" />
        </div>
        <div className="flex h-[31px] shrink-0 items-center bg-[#e8e8e8] pb-[2px] pl-2 text-[13.300px] whitespace-nowrap text-[#666]">
          <svg width="16" height="16" viewBox="0 0 16 16" className="mr-2 shrink-0" fill="none" stroke="#444" strokeWidth="1.200"><path d="M1 1h14v12H4l-3 2.500zM4 5h8M4 7.500h8M4 10h5" /></svg>
          单击此处添加备注
        </div>
      </div>
    </div>
    <div className="flex h-[11px] shrink-0 border-t border-[#ddd] bg-[#f3f3f3] pt-[5px]">
      <div className="ml-[89px] h-2 w-px bg-[#d8d8d8]" />
      <div className="ml-[83px] h-2 w-px bg-[#d8d8d8]" />
    </div>
  </div>
);

/* ---------- PicGo ---------- */

const MenuItem = ({ icon, label, on = false, more = false }: { icon: React.ReactNode; label: string; on?: boolean; more?: boolean }) => (
  <div className={`flex h-14 items-center pl-6 ${on ? 'text-[#409eff]' : 'text-[#eee]'}`}>
    <svg width="16" height="16" viewBox="0 0 16 16" className={on ? 'text-[#409eff]' : 'text-[#878d99]'}>{icon}</svg>
    <span className={`ml-[9px] ${more ? 'w-[90px]' : 'w-[118px]'} ${on ? '' : 'font-medium'}`}>{label}</span>
    {on && <div className="mb-[2px] h-5 w-[3px] bg-[#409eff]" />}
    {more && <svg width="10" height="6" viewBox="0 0 10 6" className="mb-1"><path d="M.500.500L5 5 9.500.500" fill="none" stroke="#8b8b8b" /></svg>}
  </div>
);

const PicGo = () => (
  <div className="flex h-[450px] w-[372px] flex-col bg-[#3f3c37] font-['Liberation_Sans','Noto_Sans_CJK_SC',sans-serif] text-[14px] shadow-[0_3px_14px_rgba(0,0,0,.5)]">
    <div className="h-[23px] shrink-0 overflow-hidden pl-[364px] text-[12px] leading-[22px] font-bold whitespace-nowrap text-[#eee]">PicGo</div>
    <div className="flex h-[427px]">
      <div className="w-[229px]">
        <div className="h-[402px]">
          <MenuItem on label="上传区" icon={<><path d="M4 14a4 4 0 0 1-.8-7.800 5 5 0 0 1 9.600 0A4 4 0 0 1 12 14z" fill="currentColor" /><path d="M8 14V9M5.500 10.500L8 8l2.500 2.500" fill="none" stroke="#3f3c37" strokeWidth="1.300" /></>} />
          <MenuItem label="相册" icon={<><rect y="1.500" width="16" height="13" rx="1" fill="currentColor" /><circle cx="4.800" cy="5.500" r="1.500" fill="#3f3c37" /><path d="M2 12l3-3 2 1.500L10.500 6 14 10v2z" fill="#3f3c37" /></>} />
          <MenuItem more label="图床设置" icon={<path d="M1 1.500h6v6H1zM9 1.500h6v6H9zM1 9h6v6H1zM9 9h6v6H9z" fill="currentColor" />} />
          <MenuItem label="PicGo设置" icon={<g fill="none" stroke="currentColor" strokeWidth="1.200"><path d="M5.500 1h5l1 2.300 2.500-.300L15.500 7v2L14 13l-2.500-.300L10.500 15h-5l-1-2.300L2 13 .500 9V7L2 3l2.500.300z" strokeLinejoin="round" /><circle cx="8" cy="8" r="3.200" /></g>} />
          <MenuItem label="插件设置" icon={<g fill="currentColor"><path d="M13 3L4 8.500 13 13" fill="none" stroke="currentColor" /><circle cx="3.500" cy="8.500" r="2.500" /><circle cx="13" cy="3.500" r="2.300" /><circle cx="13" cy="13" r="2.300" /></g>} />
        </div>
        <svg width="14" height="14" viewBox="0 0 14 14" className="mt-[6px] ml-[5px]"><circle cx="7" cy="7" r="7" fill="#878d99" /><path d="M6 6h2l-1 4.500h1M7.500 3h1v1.300h-1z" fill="none" stroke="#3f3c37" strokeWidth="1.200" /></svg>
      </div>
      <div className="w-[143px] overflow-hidden pt-[65px]">
        <div className="ml-[27px] h-[224px] w-[400px] rounded-[8px] border-2 border-dashed border-[#a9dbff] bg-[#5f6b70]" />
        <div className="mt-[62px] flex h-7 w-[300px] font-['Liberation_Sans'] text-[12px] leading-7">
          <div className="w-[87px] rounded-l-full bg-[#409eff] text-center font-bold tracking-[-.2px] text-white">Markdown</div>
          <div className="w-[62px] border-y border-[#dcdfe6] bg-white text-center leading-[26px] text-[#606266]">HTML</div>
        </div>
      </div>
    </div>
  </div>
);

export default function App() {
  return (
    <div className="relative h-[1008px] w-[932px] overflow-hidden bg-[#0036b5] bg-[radial-gradient(ellipse_300px_100px_at_940px_0,#1c66e3,transparent),linear-gradient(35deg,transparent_19%,#0a4cd066_25%,transparent_30%),linear-gradient(170deg,#003bbb,#0035b2_50%,#0033b0)] font-['Noto_Sans','Noto_Sans_CJK_SC',sans-serif]">
      <Desktop />
      <div className="absolute top-[68px] left-[502px]"><BackExplorer /></div>
      <div className="absolute top-[100px] left-[542px] h-[60px] w-20 bg-white pt-[6px] pl-[9px] shadow-[0_0_4px_rgba(0,0,0,.5)]"><Folder /></div>
      <div className="absolute top-[21px] left-[558px]"><Wps /></div>
      <div className="absolute top-[150px] left-[62px]"><Explorer /></div>
      <div className="absolute top-[300px] left-[560px]"><PicGo /></div>
      <div className="absolute top-[940px] left-[788px] flex items-center gap-2 text-[34px] leading-[42px] font-black text-[#4472c4]">
        <span className="skew-x-[-8deg] -rotate-3">雨</span>
        <span className="translate-y-[5px] skew-x-[-8deg] -rotate-3">云</span>
        <span className="translate-y-[7px] skew-x-[-22deg] text-[36px] tracking-[-3px] [font-family:'Liberation_Sans']">21</span>
      </div>
    </div>
  );
}
